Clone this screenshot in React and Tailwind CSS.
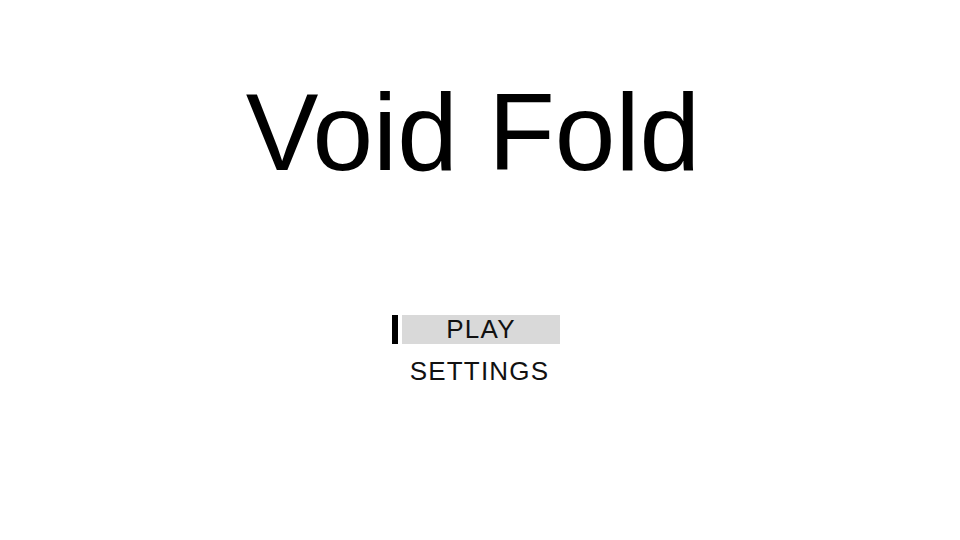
export default function App() {
  return (
    <div className="w-[960px] h-[540px] bg-white flex flex-col items-center overflow-hidden" style={{ fontFamily: '"Liberation Sans", Arial, sans-serif' }}>
      <h1 className="mt-[78px] mr-[14px] text-[109px] leading-none text-black font-normal whitespace-nowrap">Void Fold</h1>
      <div className="mt-[128px] flex flex-col gap-[13px]">
        <div className="flex items-stretch gap-[4px] ml-[2px]">
          <div className="w-[6px] bg-black" />
          <div className="w-[158px] h-[29px] bg-[#d9d9d9] text-[26px] leading-[29px] tracking-[1.2px] text-[#111] text-center">PLAY</div>
          <div className="w-[6px]" />
        </div>
        <div className="flex items-stretch gap-[4px] ml-[2px]">
          <div className="w-[6px]" />
          <div className="w-[158px] h-[29px] pr-[3px] text-[26px] leading-[29px] tracking-[1.2px] text-[#111] text-center whitespace-nowrap">SETTINGS</div>
          <div className="w-[6px]" />
        </div>
      </div>
    </div>
  );
}
